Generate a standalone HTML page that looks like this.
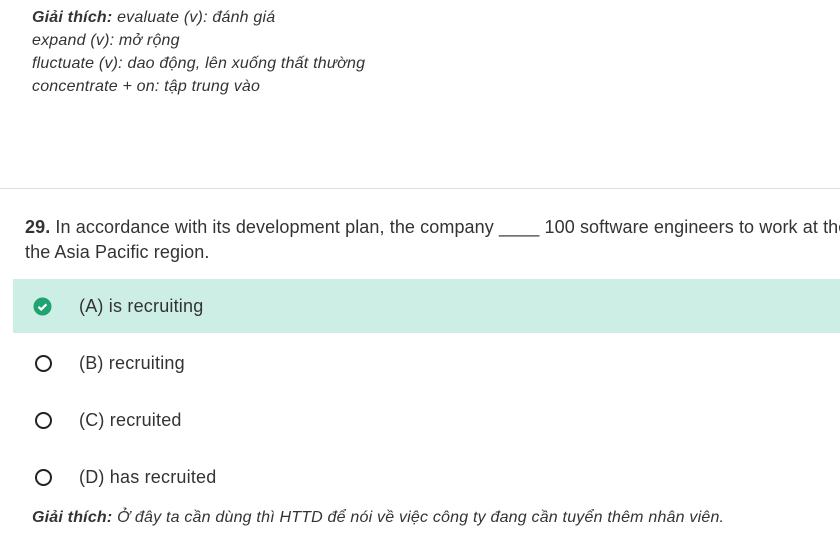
<!DOCTYPE html>
<html><head><meta charset="utf-8"><style>
body{margin:0;width:840px;height:536px;overflow:hidden;background:#fff;font-family:"Liberation Sans",sans-serif;color:#333;position:relative}
.a{position:absolute;white-space:nowrap}
.exp{left:32px;font-style:italic;font-size:16px;color:#333;letter-spacing:0.2px}
.q{left:25px;font-size:18px;color:#333;letter-spacing:0.1px}
.opt{left:79px;font-size:18px;color:#333;letter-spacing:0.2px}
.c{position:absolute;left:35px;width:13px;height:13px;border:2.5px solid #222;border-radius:50%}
</style></head><body>
<div class="a exp" style="top:9px"><b>Giải thích:</b> evaluate (v): đánh giá</div>
<div class="a exp" style="top:32px">expand (v): mở rộng</div>
<div class="a exp" style="top:55px">fluctuate (v): dao động, lên xuống thất thường</div>
<div class="a exp" style="top:78px">concentrate + on: tập trung vào</div>
<div class="a" style="left:0;top:188px;width:840px;height:1px;background:#ddd"></div>
<div class="a q" style="top:217px"><b>29.</b> In accordance with its development plan, the company ____ 100 software engineers to work at the</div>
<div class="a q" style="top:242px">the Asia Pacific region.</div>
<div class="a" style="left:13px;top:279px;width:827px;height:54px;background:#cdeee4"></div>
<svg class="a" style="left:33px;top:297px" width="19" height="19" viewBox="0 0 19 19"><circle cx="9.5" cy="9.5" r="9" fill="#1fa36f"/><path d="M5.5 9.8l2.7 2.7 5.2-5.2" stroke="#fff" stroke-width="2.2" fill="none"/></svg>
<div class="a opt" style="top:296px">(A) is recruiting</div>
<div class="c" style="top:355px"></div>
<div class="a opt" style="top:353px">(B) recruiting</div>
<div class="c" style="top:412px"></div>
<div class="a opt" style="top:410px">(C) recruited</div>
<div class="c" style="top:469px"></div>
<div class="a opt" style="top:467px">(D) has recruited</div>
<div class="a exp" style="top:509px"><b>Giải thích:</b> Ở đây ta cần dùng thì HTTD để nói về việc công ty đang cần tuyển thêm nhân viên.</div>
</body></html>
